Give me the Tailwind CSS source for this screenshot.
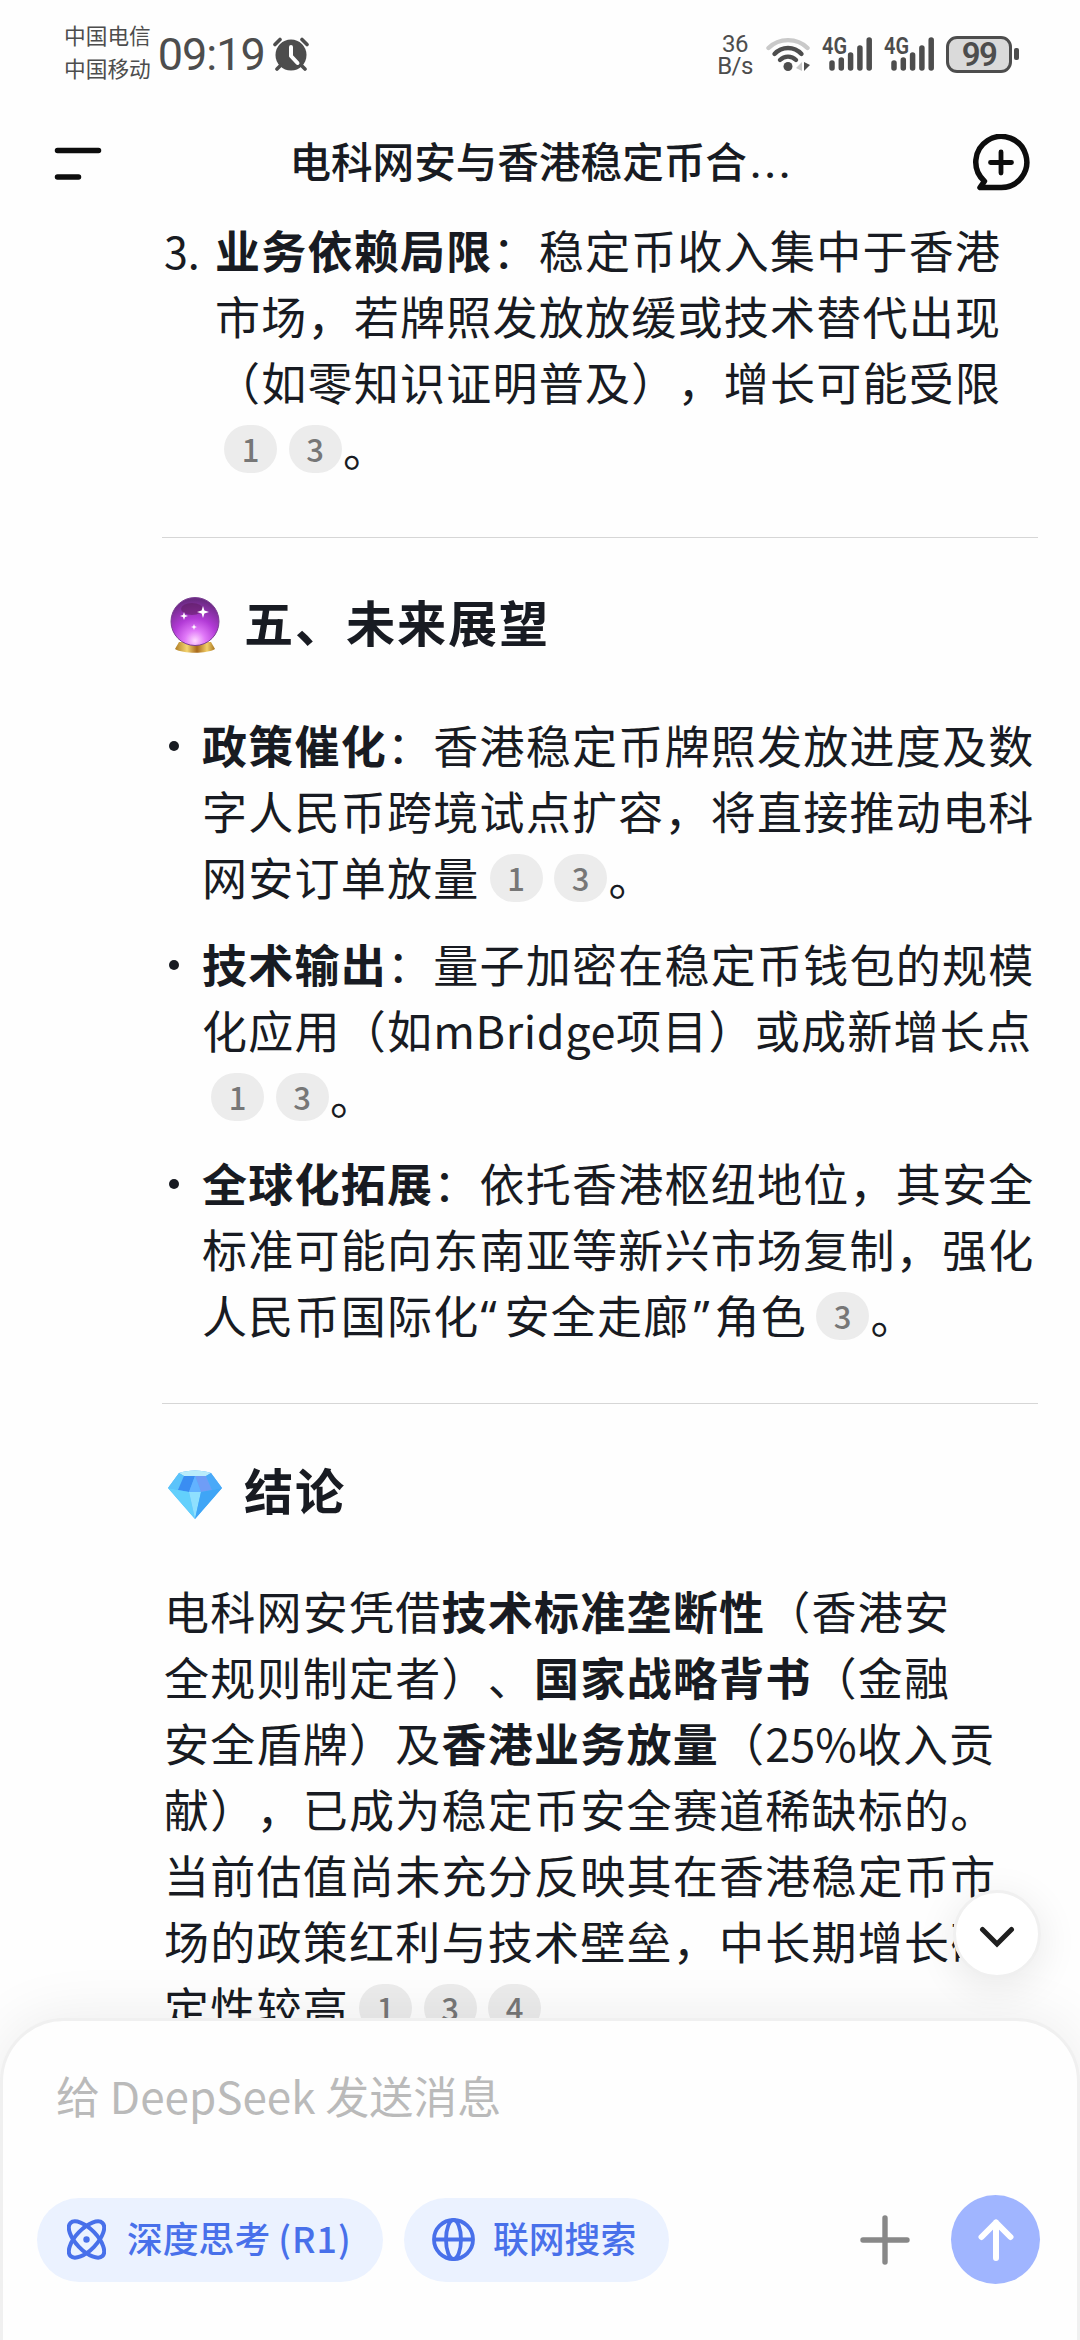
<!DOCTYPE html>
<html lang="zh-CN">
<head>
<meta charset="utf-8" />
<title>电科网安与香港稳定币合作</title>
<meta name="viewport" content="width=device-width, initial-scale=1" />
<script src="https://cdn.jsdelivr.net/npm/@tailwindcss/browser@4"></script>
</head>

<body class="bg-white">
<div class="relative flex flex-col w-[1080px] h-[2340px] overflow-hidden bg-[#fefefe] text-[#181b22] font-['Noto_Sans_CJK_SC',sans-serif] [text-spacing-trim:space-all]">

  <!-- status bar -->
  <div class="flex justify-between h-[108px] pl-[64px] pr-[61px] shrink-0 text-[#4d4d4d]">
    <div class="flex items-center">
      <div class="text-[21.7px] leading-[32.5px] pb-[5px]">
        <p>中国电信</p>
        <p>中国移动</p>
      </div>
      <p class="ml-[7px] w-[112px] text-[45px] leading-none tracking-[-1px] font-['Roboto',sans-serif]">09:19</p>
      <svg class="w-[36px] h-[34px] ml-[3px]" viewBox="0 0 36 34" fill="none" stroke="#4d4d4d" stroke-linecap="round">
        <circle cx="18" cy="18" r="15.5" fill="#4d4d4d" stroke="none" />
        <path d="M2 7.5 7 2.5M34 7.5 29 2.5M8 28l-4 4M28 28l4 4" stroke-width="3.6" />
        <path d="M18 10v9l6.5 7" stroke="#fff" stroke-width="4" stroke-linejoin="round" />
      </svg>
    </div>
    <div class="flex items-center font-['Roboto',sans-serif]">
      <div class="w-[36px] text-[24px] leading-[22px] text-center pt-[2px] tracking-[-0.5px]">
        <p>36</p>
        <p>B/s</p>
      </div>
      <svg class="w-[44px] h-[34px] ml-[13px]" viewBox="0 0 44 34" fill="none" stroke-linecap="round" stroke-width="4.4">
        <path d="M2.500 11C13 .5 31 .5 41.500 11" stroke="#c9c9c9" />
        <path d="M8.500 17C16 9 28 9 35.500 17M14 23c4.500-4.500 11.500-4.500 16 0" stroke="#4d4d4d" />
        <circle cx="22" cy="29.500" r="4.500" fill="#4d4d4d" />
        <path d="M36 25v9l-6-3z" fill="#c9c9c9" />
        <path d="M38 25v9l6-6z" fill="#4d4d4d" />
      </svg>
      <svg class="w-[51px] h-[34px] ml-[12px] overflow-visible" viewBox="0 0 51 34">
        <text x="0" y="16.500" font-size="23" font-weight="600" textLength="25" lengthAdjust="spacingAndGlyphs" fill="#4d4d4d">4G</text>
        <path d="M10 26v5M19.300 23v8M28.600 18v13M37.900 11v20M47.200 3v28" stroke="#4d4d4d" stroke-width="5.500" stroke-linecap="round" />
      </svg>
      <svg class="w-[51px] h-[34px] ml-[11px] overflow-visible" viewBox="0 0 51 34">
        <text x="0" y="16.500" font-size="23" font-weight="600" textLength="25" lengthAdjust="spacingAndGlyphs" fill="#4d4d4d">4G</text>
        <path d="M10 26v5M19.300 23v8M28.600 18v13M37.900 11v20M47.200 3v28" stroke="#4d4d4d" stroke-width="5.500" stroke-linecap="round" />
      </svg>
      <div class="flex items-center justify-center w-[66px] h-[37px] ml-[11px] border-[3px] border-[#4d4d4d] rounded-[11px] bg-[#dadada] text-[33px] leading-none font-semibold tracking-[-1.5px]">99</div>
      <div class="w-[5px] h-[12px] ml-[2px] rounded-[2px] bg-[#4d4d4d]"></div>
    </div>
  </div>

  <!-- title bar -->
  <header class="flex items-center justify-between h-[109px] pl-[54px] pr-[50px] pt-[1px] shrink-0">
    <svg class="w-[48px] h-[34px]" viewBox="0 0 48 34" stroke="#0d0d0d" stroke-width="5.500" stroke-linecap="round">
      <path d="M3.500 4.500h41M3.500 31h21" />
    </svg>
    <h1 class="pl-[9px] text-[41.600px] leading-[60px] font-medium pb-[3px]">电科网安与香港稳定币合<span class="ml-[3px] font-['Roboto',sans-serif] tracking-[3px]">...</span></h1>
    <svg class="w-[58px] h-[58px]" viewBox="0 0 58 58" fill="none" stroke="#0d0d0d" stroke-width="5.500">
      <path d="M8 53.500H29A25.500 25.500 0 1 0 12.500 47.200Z" stroke-linejoin="round" />
      <path d="M29 18v21M18.500 28.500h21" stroke-width="4.800" stroke-linecap="round" />
    </svg>
  </header>

  <!-- answer -->
  <main class="h-[1801px] shrink-0 overflow-hidden text-[45px] leading-[66px] tracking-[1.25px] whitespace-nowrap">
    <div class="flex pl-[164px]">
      <span class="w-[51px] text-[43px] tracking-normal">3.</span>
      <p>
        <b>业务依赖局限</b>：稳定币收入集中于香港<br />
        市场，若牌照发放放缓或技术替代出现<br />
        （如零知识证明普及），增长可能受限<br />
        <span class="inline-flex items-center justify-center w-[53px] h-[48px] ml-[9px] mr-[1.5px] rounded-full bg-[#ececec] text-[31px] leading-none font-medium tracking-normal text-[#777] align-[5px]">1</span><span class="inline-flex items-center justify-center w-[53px] h-[48px] ml-[10px] mr-[1.5px] rounded-full bg-[#ececec] text-[31px] leading-none font-medium tracking-normal text-[#777] align-[5px]">3</span>。
      </p>
    </div>

    <hr class="ml-[162px] mr-[42px] mt-[56px] border-t-[1.5px] border-[#d6d6d6]" />

    <h2 class="flex items-center mt-[47px] h-[72px] pl-[170px] text-[49.2px] tracking-[1.8px] font-bold">
      <svg class="w-[50px] h-[57px] mt-[8px] mr-[24px]" viewBox="0 0 50 57">
        <defs>
          <radialGradient id="ball" cx=".5" cy=".9" r=".85">
            <stop offset="0" stop-color="#ffd9ff" />
            <stop offset=".25" stop-color="#e078f8" />
            <stop offset=".55" stop-color="#b23ad6" />
            <stop offset="1" stop-color="#6a2a82" />
          </radialGradient>
          <linearGradient id="gold">
            <stop offset="0" stop-color="#b07c24" />
            <stop offset=".3" stop-color="#f3d470" />
            <stop offset=".55" stop-color="#a8691c" />
            <stop offset=".8" stop-color="#f2cf68" />
            <stop offset="1" stop-color="#a8741f" />
          </linearGradient>
        </defs>
        <path d="M9 45h32l4 7c-8 5-32 5-40 0z" fill="url(#gold)" />
        <circle cx="25" cy="24.500" r="24" fill="url(#ball)" stroke="#7b3f93" stroke-width="1" />
        <ellipse cx="22" cy="12" rx="11" ry="6" fill="#5d1c5c" opacity=".55" />
        <path d="M33 9l1.400 4.600L39 15l-4.600 1.400L33 21l-1.400-4.600L27 15l4.600-1.400zM14 15l1 3 3 1-3 1-1 3-1-3-3-1 3-1zM24 27l.8 2.200 2.200.8-2.200.8L24 33l-.8-2.200L21 30l2.200-.8z" fill="#fff" />
      </svg>
      五、未来展望
    </h2>

    <ul class="mt-[55px] pl-[169px] flex flex-col gap-[21px]">
      <li class="flex">
        <span class="w-[10px] h-[10px] mt-[29px] mr-[23px] rounded-full bg-[#181b22]"></span>
        <p>
          <b>政策催化</b>：香港稳定币牌照发放进度及数<br />
          字人民币跨境试点扩容，将直接推动电科<br />
          网安订单放量<span class="inline-flex items-center justify-center w-[53px] h-[48px] ml-[10px] mr-[1.5px] rounded-full bg-[#ececec] text-[31px] leading-none font-medium tracking-normal text-[#777] align-[5px]">1</span><span class="inline-flex items-center justify-center w-[53px] h-[48px] ml-[10px] mr-[1.5px] rounded-full bg-[#ececec] text-[31px] leading-none font-medium tracking-normal text-[#777] align-[5px]">3</span>。
        </p>
      </li>
      <li class="flex">
        <span class="w-[10px] h-[10px] mt-[29px] mr-[23px] rounded-full bg-[#181b22]"></span>
        <p>
          <b>技术输出</b>：量子加密在稳定币钱包的规模<br />
          化应用（如<span class="tracking-[0.6px]">mBridge</span>项目）或成新增长点<br />
          <span class="inline-flex items-center justify-center w-[53px] h-[48px] ml-[9px] mr-[1.5px] rounded-full bg-[#ececec] text-[31px] leading-none font-medium tracking-normal text-[#777] align-[5px]">1</span><span class="inline-flex items-center justify-center w-[53px] h-[48px] ml-[10px] mr-[1.5px] rounded-full bg-[#ececec] text-[31px] leading-none font-medium tracking-normal text-[#777] align-[5px]">3</span>。
        </p>
      </li>
      <li class="flex">
        <span class="w-[10px] h-[10px] mt-[29px] mr-[23px] rounded-full bg-[#181b22]"></span>
        <p>
          <b>全球化拓展</b>：依托香港枢纽地位，其安全<br />
          标准可能向东南亚等新兴市场复制，强化<br />
          人民币国际化<span class="inline-block w-[25px] pl-[1px] font-['Noto_Sans',sans-serif]">“</span>安全走廊<span class="inline-block w-[25px] pl-[4px] font-['Noto_Sans',sans-serif]">”</span>角色<span class="inline-flex items-center justify-center w-[53px] h-[48px] ml-[9px] mr-[1.5px] rounded-full bg-[#ececec] text-[31px] leading-none font-medium tracking-normal text-[#777] align-[5px]">3</span>。
        </p>
      </li>
    </ul>

    <hr class="ml-[162px] mr-[42px] mt-[53px] border-t-[1.5px] border-[#d6d6d6]" />

    <h2 class="flex items-center mt-[49px] h-[72px] pl-[167px] text-[49.2px] tracking-[1.8px] font-bold">
      <svg class="w-[56px] h-[49px] mt-[10px] mr-[21px]" viewBox="0 0 56 49">
        <path d="M12 3C20-.5 36-.5 44 3l11 15L28 49 1 18z" fill="#4fb4fb" />
        <path d="M12 3C20-.5 36-.5 44 3L39 6H17z" fill="#b9ecfb" />
        <path d="M12 3l5 3-6 14L1 18z" fill="#5bc3fa" />
        <path d="M17 6h11l-6 16-11-2z" fill="#3a8df2" />
        <path d="M28 6h11l6 14-11 2z" fill="#6f9df6" />
        <path d="M28 6l6 16H22z" fill="#62b2ff" />
        <path d="M44 3l11 15-10 2-6-14z" fill="#4aa9f8" />
        <path d="M1 18l10 2 11 2 6 27z" fill="#63d0fc" />
        <path d="M22 22h12l-6 27z" fill="#8fe0fe" />
        <path d="M55 18l-10 2-11 2-6 27z" fill="#3fa5f6" />
      </svg>
      结论
    </h2>

    <p class="mt-[53px] pl-[164px]">
      电科网安凭借<b>技术标准垄断性</b>（香港安<br />
      全规则制定者）、<b>国家战略背书</b>（金融<br />
      安全盾牌）及<b>香港业务放量</b>（<span class="tracking-normal">25%</span>收入贡<br />
      献），已成为稳定币安全赛道稀缺标的。<br />
      当前估值尚未充分反映其在香港稳定币市<br />
      场的政策红利与技术壁垒，中长期增长确<br />
      定性较高<span class="inline-flex items-center justify-center w-[53px] h-[48px] ml-[10px] mr-[1.5px] rounded-full bg-[#ececec] text-[31px] leading-none font-medium tracking-normal text-[#777] align-[5px]">1</span><span class="inline-flex items-center justify-center w-[53px] h-[48px] ml-[10px] mr-[1.5px] rounded-full bg-[#ececec] text-[31px] leading-none font-medium tracking-normal text-[#777] align-[5px]">3</span><span class="inline-flex items-center justify-center w-[53px] h-[48px] ml-[10px] mr-[1.5px] rounded-full bg-[#ececec] text-[31px] leading-none font-medium tracking-normal text-[#777] align-[5px]">4</span>
    </p>
  </main>

  <!-- scroll to bottom -->
  <button class="absolute right-[39px] top-[1890px] z-20 flex items-center justify-center w-[88px] h-[88px] rounded-full border-[3px] border-[#f0f0f0] bg-white shadow-[0_8px_40px_rgba(0,0,0,0.09)]">
    <svg class="w-[36px] h-[22px] mt-[6px]" viewBox="0 0 36 22" fill="none" stroke="#1f1f1f" stroke-width="5" stroke-linecap="round">
      <path d="M3.500 3.500 18 18 32.500 3.500" />
    </svg>
  </button>

  <!-- input panel -->
  <footer class="relative z-10 h-[400px] shrink-0 rounded-t-[64px] border-[3px] border-[#f0f0f0] bg-[#fefefe] shadow-[0_0_60px_rgba(0,0,0,0.08)] px-[34px]">
    <p class="pt-[42px] pl-[19px] text-[44px] leading-[64px] text-[#bababa]">给 DeepSeek 发送消息</p>
    <div class="flex items-center mt-[68px] h-[89px] text-[35.8px] font-medium text-[#4870ea]">
      <button class="flex items-center h-[84px] w-[346px] pl-[30px] rounded-full bg-[#ebf2ff]">
        <svg class="w-[39px] h-[41px] mr-[21px]" viewBox="0 0 39 41" fill="none" stroke="#4870ea" stroke-width="4">
          <ellipse cx="19.500" cy="20.500" rx="23" ry="10.500" transform="rotate(46 19.500 20.500)" />
          <ellipse cx="19.500" cy="20.500" rx="23" ry="10.500" transform="rotate(-46 19.500 20.500)" />
          <circle cx="19.500" cy="20.500" r="3.200" fill="#4870ea" stroke="none" />
        </svg>
        <span class="leading-none pb-[3px]">深度思考 <span class="tracking-[1px]">(R1)</span></span>
      </button>
      <button class="flex items-center h-[84px] w-[265px] ml-[21px] pl-[28px] rounded-full bg-[#ebf2ff]">
        <svg class="w-[43px] h-[43px] mr-[18px]" viewBox="0 0 43 43" fill="none" stroke="#4870ea" stroke-width="3.800">
          <circle cx="21.500" cy="21.500" r="19.500" />
          <ellipse cx="21.500" cy="21.500" rx="7.500" ry="19.500" />
          <path d="M2 21.500h39" />
        </svg>
        <span class="leading-none pb-[3px]">联网搜索</span>
      </button>
      <svg class="w-[50px] h-[50px] ml-[191px]" viewBox="0 0 50 50" stroke="#888" stroke-width="5.400" stroke-linecap="round">
        <path d="M25 3v44M3 25h44" />
      </svg>
      <button class="flex items-center justify-center w-[89px] h-[89px] ml-[41px] rounded-full bg-[#a0b5ff]">
        <svg class="w-[36px] h-[42px]" viewBox="0 0 36 42" fill="none" stroke="#fff" stroke-width="6" stroke-linecap="round" stroke-linejoin="round">
          <path d="M18 39V3.500M3.500 18 18 3.500 32.500 18" />
        </svg>
      </button>
    </div>
  </footer>

</div>
</body>
</html>
